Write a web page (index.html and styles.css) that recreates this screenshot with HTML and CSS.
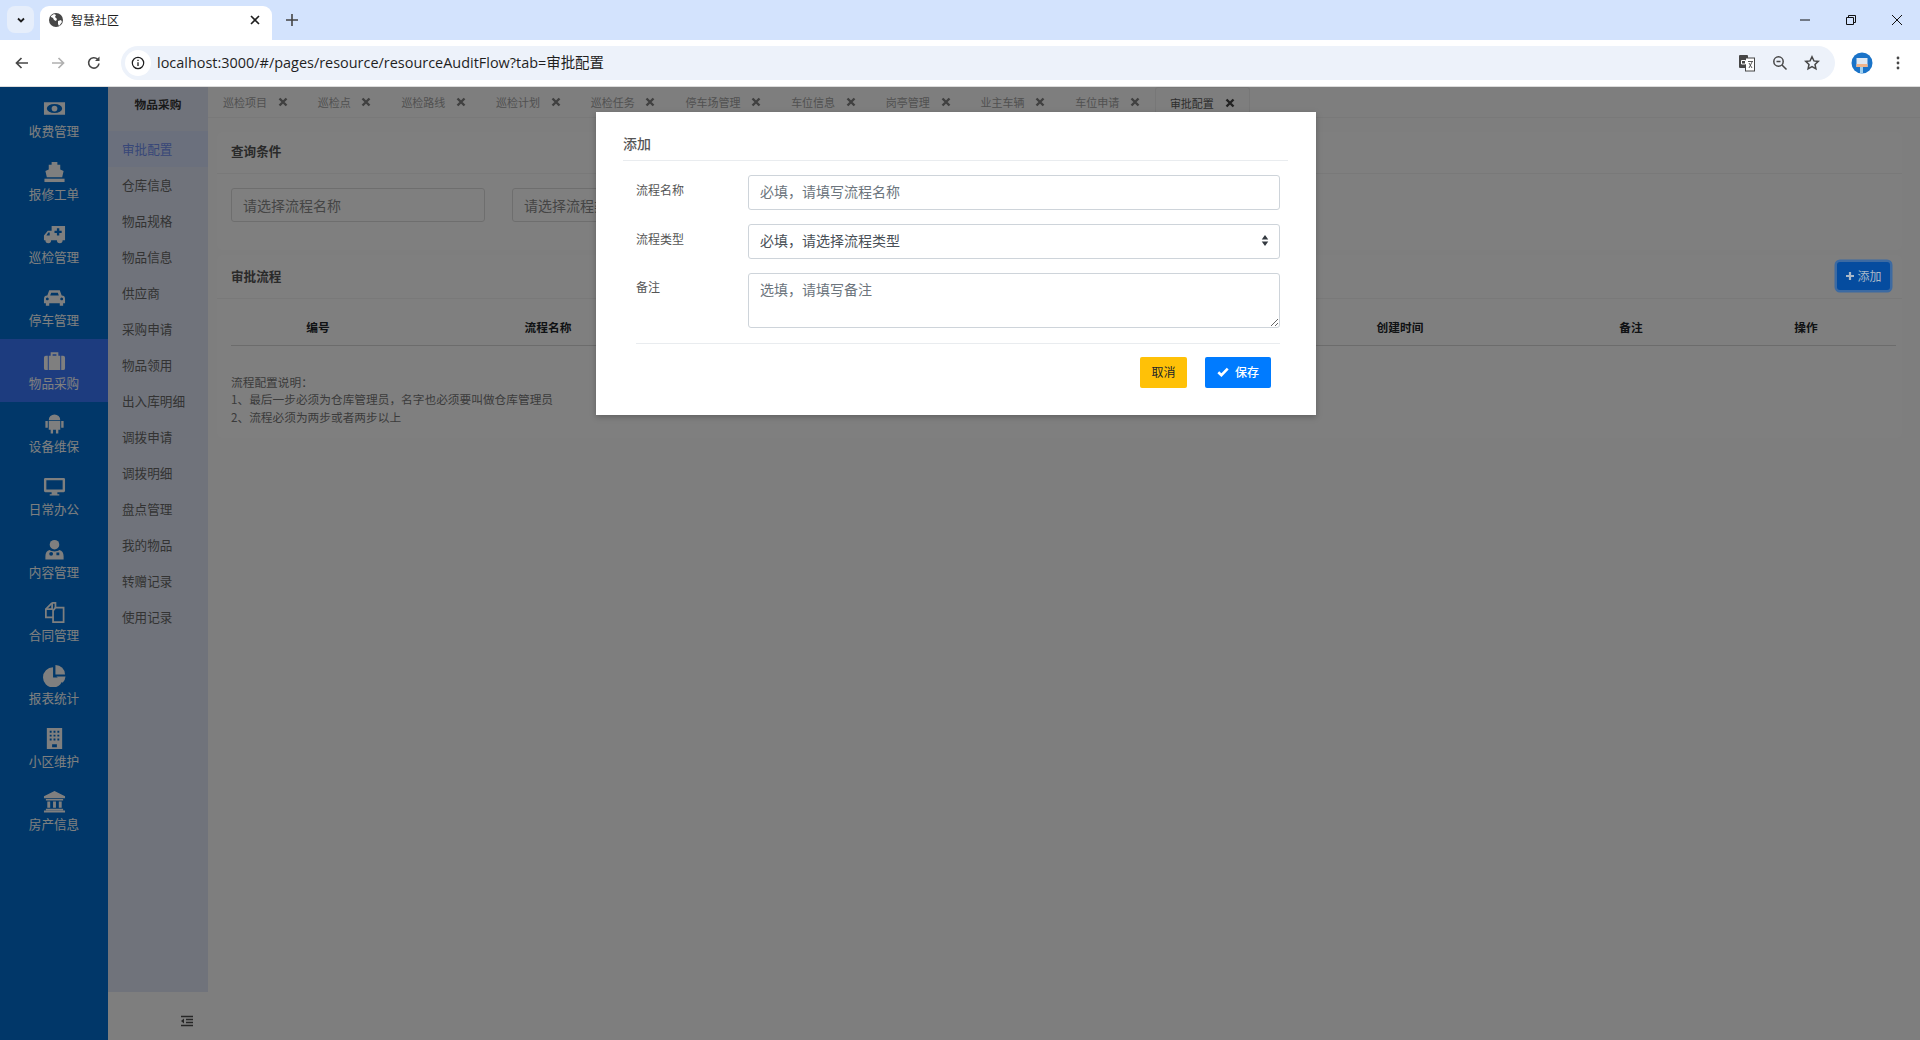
FILE: index.html
```html
<!DOCTYPE html>
<html lang="zh-CN">
<head>
  <meta charset="UTF-8" />
  <title>智慧社区</title>
  <link rel="stylesheet" href="styles.css">
</head>
<body>
  <!-- 浏览器外框 -->
  <div class="tabstrip">
    <div class="tab-list-btn">
      <svg viewBox="0 0 12 12" class="ico-12"><path d="M3 4.500 6 7.500 9 4.500" fill="none" stroke="#1f1f1f" stroke-width="1.800"/></svg>
    </div>
    <div class="browser-tab">
      <svg viewBox="0 0 16 16" class="ico-16"><circle cx="8" cy="8" r="7" fill="#474747"/><path d="M3 4l3-2 2 1-1 2 2 2-1 2-2-1-1-2-2-1zM10 9l3-1 1 2-3 4-1-2z" fill="#fff"/></svg>
      <span class="browser-tab-title">智慧社区</span>
      <svg viewBox="0 0 12 12" class="ico-12 browser-tab-close"><path d="M2 2l8 8M10 2l-8 8" stroke="#1f1f1f" stroke-width="1.600"/></svg>
    </div>
    <svg viewBox="0 0 14 14" class="ico-14 new-tab"><path d="M7 1v12M1 7h12" stroke="#444" stroke-width="1.600"/></svg>
    <div class="window-btns">
      <svg viewBox="0 0 12 12" class="ico-12"><path d="M1 6h10" stroke="#111" stroke-width="1"/></svg>
      <svg viewBox="0 0 12 12" class="ico-12"><path d="M1.500 3.500h7v7h-7zM3.500 3.500v-2h7v7h-2" fill="none" stroke="#111" stroke-width="1"/></svg>
      <svg viewBox="0 0 12 12" class="ico-12"><path d="M1 1l10 10M11 1L1 11" stroke="#111" stroke-width="1"/></svg>
    </div>
  </div>

  <div class="toolbar">
    <svg viewBox="0 0 16 16" class="ico-16 nav-btn"><path d="M14 8H3M7.500 3 2.500 8l5 5" fill="none" stroke="#474747" stroke-width="1.700"/></svg>
    <svg viewBox="0 0 16 16" class="ico-16 nav-btn"><path d="M2 8h11M8.500 3l5 5-5 5" fill="none" stroke="#b0b0b0" stroke-width="1.700"/></svg>
    <svg viewBox="0 0 16 16" class="ico-16 nav-btn"><path d="M13 8.500A5.200 5.200 0 1 1 11.600 4.300" fill="none" stroke="#474747" stroke-width="1.600"/><path d="M13.500 1.500v4.500H9z" fill="#474747"/></svg>
    <div class="address-bar">
      <span class="info-chip">
        <svg viewBox="0 0 16 16" class="ico-14"><circle cx="8" cy="8" r="6.500" fill="none" stroke="#1f1f1f" stroke-width="1.400"/><path d="M8 7v4.500M8 4.300v1.400" stroke="#1f1f1f" stroke-width="1.500"/></svg>
      </span>
      <span class="url">localhost:3000/#/pages/resource/resourceAuditFlow?tab=审批配置</span>
      <svg viewBox="0 0 18 18" class="ico-18 addr-icon">
        <rect x="1" y="1" width="9" height="13" rx="1" fill="#474747"/>
        <rect x="7.500" y="4" width="9" height="13" fill="#fff" stroke="#474747"/>
        <path d="M3.500 6.500h4v3.500h-4z" fill="none" stroke="#fff"/>
        <path d="M10 7.500h5M14 8l-3 6M11 9l3 5" stroke="#474747" fill="none" stroke-width=".9"/>
      </svg>
      <svg viewBox="0 0 16 16" class="ico-16 addr-icon"><circle cx="6.500" cy="6.500" r="4.700" fill="none" stroke="#474747" stroke-width="1.500"/><path d="M4.500 6.500h4M10 10l4.500 4.500" stroke="#474747" stroke-width="1.500"/></svg>
      <svg viewBox="0 0 16 16" class="ico-16 addr-icon"><path d="M8 1.800l1.900 4.100 4.400.5-3.300 3 .9 4.400L8 11.600l-3.900 2.200.9-4.400-3.300-3 4.400-.5z" fill="none" stroke="#474747" stroke-width="1.500"/></svg>
    </div>
    <svg viewBox="0 0 22 22" class="avatar">
      <circle cx="11" cy="11" r="10.500" fill="#1a73c8"/>
      <path d="M5.500 6h11v9h-11z" fill="#dfe8f2"/>
      <path d="M5.500 12h11v3h-11z" fill="#f0b48a"/>
      <path d="M9 15h3v6H9z" fill="#9fd0f0"/>
    </svg>
    <svg viewBox="0 0 16 16" class="ico-16 menu-dots"><circle cx="8" cy="3" r="1.400" fill="#474747"/><circle cx="8" cy="8" r="1.400" fill="#474747"/><circle cx="8" cy="13" r="1.400" fill="#474747"/></svg>
  </div>

  <!-- 页面 -->
  <div class="page">
    <nav class="sidebar">
      <a class="side-item">
        <svg viewBox="0 0 24 24" class="side-icon"><path fill-rule="evenodd" d="M1 5.500h22v13H1zM4 12a8 4.800 0 1 0 16 0 8 4.800 0 1 0-16 0z"/><circle cx="12" cy="12" r="3"/></svg>
        <span>收费管理</span>
      </a>
      <a class="side-item">
        <svg viewBox="0 0 24 24" class="side-icon"><path d="M9 2h6v3h3v5l3.500 1.500L20 18H4l-1.500-6.500L6 10V5h3z"/><path d="M1.500 19.500h21V23h-21z"/></svg>
        <span>报修工单</span>
      </a>
      <a class="side-item">
        <svg viewBox="0 0 24 24" class="side-icon"><path fill-rule="evenodd" d="M9 3h14v15h-2.500a3 3 0 0 1-6 0H8.500a3 3 0 0 1-6 0H1v-5l4-5h4zM14.500 5.500v2.500H12v2.500h2.500V13H17v-2.500h2.500V8H17V5.500zM3.500 13H7v-3H5.500z"/></svg>
        <span>巡检管理</span>
      </a>
      <a class="side-item">
        <svg viewBox="0 0 24 24" class="side-icon"><path fill-rule="evenodd" d="M4.500 10 6.500 4.500h11L19.500 10A3.500 3.500 0 0 1 23 13.500V18h-2v2.500h-3.500V18h-11v2.500H3V18H1v-4.500A3.500 3.500 0 0 1 4.500 10zM7.500 10h9L15.500 7h-7zM4.500 12a1.500 1.500 0 1 0 .01 0zM19.500 12a1.500 1.500 0 1 0 .01 0z"/></svg>
        <span>停车管理</span>
      </a>
      <a class="side-item side-item-active">
        <svg viewBox="0 0 24 24" class="side-icon"><path fill-rule="evenodd" d="M8 7V3.500h8V7h5a2 2 0 0 1 2 2v11a2 2 0 0 1-2 2H3a2 2 0 0 1-2-2V9a2 2 0 0 1 2-2zM10 5.500V7h4V5.500zM5 7v15h1V7zM18 7v15h1V7z"/></svg>
        <span>物品采购</span>
      </a>
      <a class="side-item">
        <svg viewBox="0 0 24 24" class="side-icon"><path d="M6 8.500a6 6 0 0 1 12 0zM6 9.500h12v9h-2v4h-2.500v-4h-3v4H8v-4H6zM2.500 9.500h2.500v7H2.500zM19 9.500h2.500v7H19z"/></svg>
        <span>设备维保</span>
      </a>
      <a class="side-item">
        <svg viewBox="0 0 24 24" class="side-icon"><path fill-rule="evenodd" d="M2.500 3h19A1.500 1.500 0 0 1 23 4.500v12a1.500 1.500 0 0 1-1.500 1.500H15v2h2v1.500H7V20h2v-2H2.500A1.500 1.500 0 0 1 1 16.500v-12A1.500 1.500 0 0 1 2.500 3zM3.500 5.500V15h17V5.500z"/></svg>
        <span>日常办公</span>
      </a>
      <a class="side-item">
        <svg viewBox="0 0 24 24" class="side-icon"><circle cx="12" cy="7" r="5"/><path fill-rule="evenodd" d="M7 12.500c2.500 2 7.500 2 10 0 3 .5 4.500 3 4.500 6.500v3.500h-19V19c0-3.500 1.500-6 4.500-6.500zM6.500 16.500a2 2 0 1 0 4 0 2 2 0 0 0-4 0zM14 15v3h3v-3z"/></svg>
        <span>内容管理</span>
      </a>
      <a class="side-item">
        <svg viewBox="0 0 24 24" class="side-icon"><path d="M9.500 2h3.500v5M9.500 2 3 8.500V17h8" fill="none" stroke="#fff" stroke-width="1.800"/><path d="M9.500 2v6.500H3" fill="none" stroke="#fff" stroke-width="1.800"/><path d="M13 7h8.500v15h-11V10z" fill="none" stroke="#fff" stroke-width="1.800"/></svg>
        <span>合同管理</span>
      </a>
      <a class="side-item">
        <svg viewBox="0 0 24 24" class="side-icon"><path d="M10.500 3.500v10.500h10.500A10.500 10.500 0 1 1 10.500 3.500z"/><path d="M13 1a10 10 0 0 1 10 10H13z"/><path d="M14 13h9.500a10 10 0 0 1-3 6.500z"/></svg>
        <span>报表统计</span>
      </a>
      <a class="side-item">
        <svg viewBox="0 0 24 24" class="side-icon"><path fill-rule="evenodd" d="M4 1h16v22H4zM7 4v2h2V4zM11 4v2h2V4zM15 4v2h2V4zM7 8v2h2V8zM11 8v2h2V8zM15 8v2h2V8zM7 12v2h2v-2zM11 12v2h2v-2zM15 12v2h2v-2zM9.500 18v3h5v-3z"/></svg>
        <span>小区维护</span>
      </a>
      <a class="side-item">
        <svg viewBox="0 0 24 24" class="side-icon"><path d="M12 1 23 6.500V8.500H1V6.500zM3 9.500h18V11H3zM4.500 12h3v6.500h-3zM10.500 12h3v6.500h-3zM16.500 12h3v6.500h-3zM3 19.500h18V21H3zM1 21.500h22V23.500H1z"/></svg>
        <span>房产信息</span>
      </a>
    </nav>

    <div class="subnav-wrap">
      <aside class="subnav">
        <div class="subnav-title">物品采购</div>
        <a class="subnav-item subnav-item-active">审批配置</a>
        <a class="subnav-item">仓库信息</a>
        <a class="subnav-item">物品规格</a>
        <a class="subnav-item">物品信息</a>
        <a class="subnav-item">供应商</a>
        <a class="subnav-item">采购申请</a>
        <a class="subnav-item">物品领用</a>
        <a class="subnav-item">出入库明细</a>
        <a class="subnav-item">调拨申请</a>
        <a class="subnav-item">调拨明细</a>
        <a class="subnav-item">盘点管理</a>
        <a class="subnav-item">我的物品</a>
        <a class="subnav-item">转赠记录</a>
        <a class="subnav-item">使用记录</a>
      </aside>
      <div class="subnav-foot">
        <svg viewBox="0 0 14 12" class="collapse-icon"><path d="M1 1.500h12M6 4.500h7M6 7.500h7M1 10.500h12" stroke="#fff" stroke-width="1.500"/><path d="M4 3.500v5L1 6z" fill="#fff"/></svg>
      </div>
    </div>

    <main class="main">
      <div class="tabs">
        <div class="tab"><span>巡检项目</span><svg viewBox="0 0 10 10" class="tab-x"><path d="M1.500 1.500l7 7M8.500 1.500l-7 7"/></svg></div>
        <div class="tab"><span>巡检点</span><svg viewBox="0 0 10 10" class="tab-x"><path d="M1.500 1.500l7 7M8.500 1.500l-7 7"/></svg></div>
        <div class="tab"><span>巡检路线</span><svg viewBox="0 0 10 10" class="tab-x"><path d="M1.500 1.500l7 7M8.500 1.500l-7 7"/></svg></div>
        <div class="tab"><span>巡检计划</span><svg viewBox="0 0 10 10" class="tab-x"><path d="M1.500 1.500l7 7M8.500 1.500l-7 7"/></svg></div>
        <div class="tab"><span>巡检任务</span><svg viewBox="0 0 10 10" class="tab-x"><path d="M1.500 1.500l7 7M8.500 1.500l-7 7"/></svg></div>
        <div class="tab"><span>停车场管理</span><svg viewBox="0 0 10 10" class="tab-x"><path d="M1.500 1.500l7 7M8.500 1.500l-7 7"/></svg></div>
        <div class="tab"><span>车位信息</span><svg viewBox="0 0 10 10" class="tab-x"><path d="M1.500 1.500l7 7M8.500 1.500l-7 7"/></svg></div>
        <div class="tab"><span>岗亭管理</span><svg viewBox="0 0 10 10" class="tab-x"><path d="M1.500 1.500l7 7M8.500 1.500l-7 7"/></svg></div>
        <div class="tab"><span>业主车辆</span><svg viewBox="0 0 10 10" class="tab-x"><path d="M1.500 1.500l7 7M8.500 1.500l-7 7"/></svg></div>
        <div class="tab"><span>车位申请</span><svg viewBox="0 0 10 10" class="tab-x"><path d="M1.500 1.500l7 7M8.500 1.500l-7 7"/></svg></div>
        <div class="tab tab-active"><span>审批配置</span><svg viewBox="0 0 10 10" class="tab-x"><path d="M1.500 1.500l7 7M8.500 1.500l-7 7"/></svg></div>
      </div>

      <div class="content">
        <section class="card">
          <div class="card-head card-head-query">查询条件</div>
          <div class="query-row">
            <input class="query-input" placeholder="请选择流程名称" />
            <input class="query-input" placeholder="请选择流程类型" />
          </div>
        </section>

        <section class="card">
          <div class="card-head card-head-flow">
            <span>审批流程</span>
            <button class="btn-add">
              <svg viewBox="0 0 10 10" class="btn-add-icon"><path d="M5 1v8M1 5h8" stroke="#a9b8c8" stroke-width="2.200"/></svg>添加
            </button>
          </div>
          <div class="flow-body">
            <table class="flow-table">
              <colgroup>
                <col class="col-a"><col class="col-b"><col class="col-c"><col class="col-d"><col class="col-e"><col class="col-f">
              </colgroup>
              <thead>
                <tr>
                  <th>编号</th>
                  <th>流程名称</th>
                  <th>流程类型</th>
                  <th>创建时间</th>
                  <th>备注</th>
                  <th>操作</th>
                </tr>
              </thead>
            </table>
            <div class="flow-notes">
              流程配置说明：<br>
              1、最后一步必须为仓库管理员，名字也必须要叫做仓库管理员<br>
              2、流程必须为两步或者两步以上
            </div>
          </div>
        </section>
      </div>
    </main>

    <!-- 弹窗 -->
    <div class="backdrop">
      <div class="modal">
        <div class="modal-title">添加</div>
        <div class="modal-body">
          <div class="form-row">
            <label class="form-label">流程名称</label>
            <input class="form-control form-control-name" placeholder="必填，请填写流程名称" />
          </div>
          <div class="form-row">
            <label class="form-label">流程类型</label>
            <div class="select-wrap">
              <select class="form-control form-select">
                <option>必填，请选择流程类型</option>
              </select>
              <svg viewBox="0 0 8 14" class="select-arrows"><path d="M4 1 7.500 6H.5zM4 13 .5 8h7z" fill="#343a40"/></svg>
            </div>
          </div>
          <div class="form-row">
            <label class="form-label form-label-area">备注</label>
            <textarea class="form-control form-area" placeholder="选填，请填写备注"></textarea>
          </div>
          <div class="modal-foot">
            <button class="btn btn-cancel">取消</button>
            <button class="btn btn-save">
              <svg viewBox="0 0 12 10" class="btn-save-icon"><path d="M1.300 5.200 4.400 8.200 10.700 1.600" fill="none" stroke="#fff" stroke-width="2.600"/></svg>保存
            </button>
          </div>
        </div>
      </div>
    </div>
  </div>
</body>
</html>
```

FILE: styles.css
```css
* {
  box-sizing: border-box;
}

body {
  margin: 0;
  height: 1040px;
  overflow: hidden;
  background: #fff;
  font-family: "Noto Sans CJK SC", "Noto Sans", sans-serif;
  font-size: 12px;
  color: #555;
}

/* 浏览器外框 */
.ico-12 { width: 12px; height: 12px; flex: none; }
.ico-14 { width: 14px; height: 14px; flex: none; }
.ico-16 { width: 16px; height: 16px; flex: none; }
.ico-18 { width: 18px; height: 18px; flex: none; }

.tabstrip {
  height: 40px;
  background: #d3e3fd;
  display: flex;
  align-items: flex-end;
  padding-left: 7px;
}

.tab-list-btn {
  width: 27px;
  height: 27px;
  margin-bottom: 7px;
  border-radius: 8px;
  background: #e6eefb;
  display: flex;
  align-items: center;
  justify-content: center;
}

.browser-tab {
  width: 232px;
  height: 34px;
  margin-left: 6px;
  padding: 0 11px 6px 8px;
  background: #fff;
  border-radius: 9px 9px 0 0;
  display: flex;
  align-items: center;
}

.browser-tab-title {
  margin: 0 0 1px 7px;
  font-size: 12px;
  color: #1f1f1f;
  flex: 1;
}

.new-tab {
  margin: 0 0 13px 13px;
}

.window-btns {
  margin-left: auto;
  margin-bottom: 14px;
  padding-right: 17px;
  display: flex;
  gap: 34px;
}

.toolbar {
  height: 47px;
  background: #fff;
  border-bottom: 1px solid #dcdcdc;
  display: flex;
  align-items: center;
  padding: 0 14px 1px 14px;
}

.nav-btn {
  margin-right: 20px;
}

.address-bar {
  width: 1714px;
  flex: none;
  height: 34px;
  margin-left: -1px;
  border-radius: 17px;
  background: #edf2fa;
  display: flex;
  align-items: center;
  padding: 0 15px 0 4px;
}

.info-chip {
  width: 26px;
  height: 26px;
  border-radius: 50%;
  background: #fff;
  display: flex;
  align-items: center;
  justify-content: center;
}

.url {
  margin: 0 0 2px 6px;
  font-family: "Open Sans", "Noto Sans CJK SC", sans-serif;
  font-size: 14.450px;
  color: #1f1f1f;
  flex: 1;
}

.addr-icon {
  margin-left: 16px;
}

.avatar {
  width: 22px;
  height: 22px;
  margin-left: 16px;
  flex: none;
}

.menu-dots {
  margin-left: 17px;
}

/* 页面框架 */
.page {
  position: relative;
  height: 953px;
  display: flex;
  background: #fcfcfc;
}

.sidebar {
  width: 108px;
  flex: none;
  background: #026fd2;
}

.side-item {
  height: 63px;
  padding-top: 10px;
  display: flex;
  flex-direction: column;
  align-items: center;
  color: #fff;
  font-size: 12.600px;
  line-height: 20px;
}

.side-item-active {
  background: #3a78ff;
}

.side-icon {
  width: 23px;
  height: 23px;
  margin-bottom: 1px;
  fill: #fff;
}

.subnav-wrap {
  width: 100px;
  flex: none;
  display: flex;
  flex-direction: column;
}

.subnav {
  height: 905px;
  background: #e1e6f6;
}

.subnav-title {
  height: 44px;
  padding-bottom: 12px;
  display: flex;
  align-items: center;
  justify-content: center;
  font-size: 11.700px;
  font-weight: 700;
  color: #333;
}

.subnav-item {
  display: block;
  height: 36px;
  line-height: 36px;
  padding-left: 14px;
  font-size: 12.600px;
  color: #666;
}

.subnav-item-active {
  background: #d7e1fb;
  color: #6f8ef0;
}

.subnav-foot {
  flex: 1;
  display: flex;
  align-items: center;
  justify-content: flex-end;
  padding: 10px 14px 0 0;
}

.collapse-icon {
  width: 14px;
  height: 12px;
  filter: brightness(.3);
}

/* 页签 */
.main {
  flex: 1;
  min-width: 0;
}

.tabs {
  height: 31px;
  display: flex;
  border-bottom: 1px solid #f2f2f2;
}

.tab {
  padding: 0 15px;
  display: flex;
  align-items: center;
  gap: 10.700px;
  font-size: 11px;
  color: #a2a2a2;
}

.tab-x {
  width: 10px;
  height: 10px;
  stroke: #808080;
  stroke-width: 2.400;
}

.tab-active {
  padding: 0 14px;
  color: #5a5a5a;
  border: 1px solid #eee;
  border-bottom: none;
  border-radius: 3px 3px 0 0;
}

.tab-active .tab-x {
  stroke: #444;
}

/* 内容卡片 */
.content {
  padding: 14px 18px 0 9px;
  display: flex;
  flex-direction: column;
  gap: 5px;
}

.card {
  background: #fff;
  border-radius: 6px;
}

.card-head {
  border-bottom: 1px solid #f2f2f2;
  padding: 0 12px 0 14px;
  display: flex;
  align-items: center;
  justify-content: space-between;
  font-size: 12.600px;
  font-weight: 700;
  color: #555;
}

.card-head-query {
  height: 42px;
  padding-bottom: 4px;
}

.card-head-flow {
  height: 44px;
  padding-bottom: 2px;
}

.query-row {
  padding: 14px 14px 28px;
  display: grid;
  grid-template-columns: 254px 254px;
  gap: 27px;
}

.query-input {
  height: 34px;
  padding: 0 0 1px 11px;
  border: 1px solid #ddd;
  border-radius: 3px;
  font: inherit;
  font-size: 14px;
  background: #fff;
}

.query-input::placeholder {
  color: #8a8a8a;
}

/* 蓝色焦点按钮，压在遮罩之上直接取成品色 */
.btn-add {
  position: relative;
  z-index: 1;
  width: 53px;
  height: 28px;
  border: none;
  border-radius: 3px;
  background: #054c9f;
  box-shadow: 0 0 0 2.500px #3c6aa2;
  color: #a9b8c8;
  font: inherit;
  font-size: 12px;
  font-weight: 400;
  display: flex;
  align-items: center;
  justify-content: center;
  gap: 2px;
  padding: 0;
}

.btn-add-icon {
  width: 10px;
  height: 10px;
}

.flow-body {
  padding: 0 6px 13px 14px;
}

.flow-table {
  width: 100%;
  border-collapse: collapse;
  table-layout: fixed;
}

.col-a { width: 174px; }
.col-b { width: 286px; }
.col-c { width: 563px; }
.col-d { width: 292px; }
.col-e { width: 170px; }
.col-f { width: 180px; }

.flow-table th {
  height: 46px;
  padding: 0 0 9px;
  vertical-align: bottom;
  border-bottom: 1px solid #d8d8d8;
  font-size: 11.700px;
  line-height: 18px;
  font-weight: 700;
  color: #212529;
  text-align: center;
}

.flow-notes {
  margin-top: 27px;
  font-size: 11.700px;
  line-height: 17.500px;
  color: #777;
}

/* 弹窗 */
.backdrop {
  position: absolute;
  inset: 0;
  padding: 25px 8px 0 0;
  background: rgba(0, 0, 0, .5);
  display: flex;
  justify-content: center;
  align-items: flex-start;
}

.modal {
  width: 720px;
  height: 303px;
  padding: 0 28px 0 27px;
  background: #fff;
  box-shadow: 0 2px 6px rgba(0, 0, 0, .25);
}

.modal-title {
  height: 49px;
  padding-top: 21px;
  border-bottom: 1px solid #e9ecef;
  font-size: 14px;
  line-height: 20px;
  font-weight: 500;
  color: #555;
}

.modal-body {
  padding: 14px 8px 0 13px;
}

.form-row {
  display: flex;
  margin-bottom: 14px;
}

.form-label {
  width: 112px;
  flex: none;
  padding-top: 6px;
  font-size: 12px;
  line-height: 18px;
  color: #555;
}

.form-label-area {
  padding-top: 5px;
}

.form-control {
  display: block;
  width: 100%;
  padding: 0 11px;
  border: 1px solid #ced4da;
  border-radius: 3px;
  background: #fff;
  font: inherit;
  font-size: 14px;
  color: #495057;
}

.form-control::placeholder {
  color: #6c757d;
  opacity: 1;
}

.form-control-name {
  height: 35px;
  padding-bottom: 3px;
}

.select-wrap {
  position: relative;
  flex: 1;
}

.form-select {
  height: 35px;
  padding-bottom: 3px;
  appearance: none;
}

.select-arrows {
  position: absolute;
  right: 11px;
  top: 10px;
  width: 8px;
  height: 13px;
}

.form-area {
  height: 55px;
  padding-top: 5px;
  line-height: 21px;
}

.modal-foot {
  margin-top: 15px;
  padding: 13px 9px 0 0;
  border-top: 1px solid #e9ecef;
  display: flex;
  justify-content: flex-end;
  gap: 18px;
}

.btn {
  height: 31px;
  border: none;
  border-radius: 2px;
  padding: 0 0 2px;
  font: inherit;
  font-size: 12px;
  display: flex;
  align-items: center;
  justify-content: center;
}

.btn-cancel {
  width: 47px;
  background: #ffc107;
  color: #212529;
}

.btn-save {
  width: 66px;
  gap: 6px;
  background: #007bff;
  color: #fff;
  font-weight: 500;
}

.btn-save-icon {
  width: 12px;
  height: 10px;
}
```
